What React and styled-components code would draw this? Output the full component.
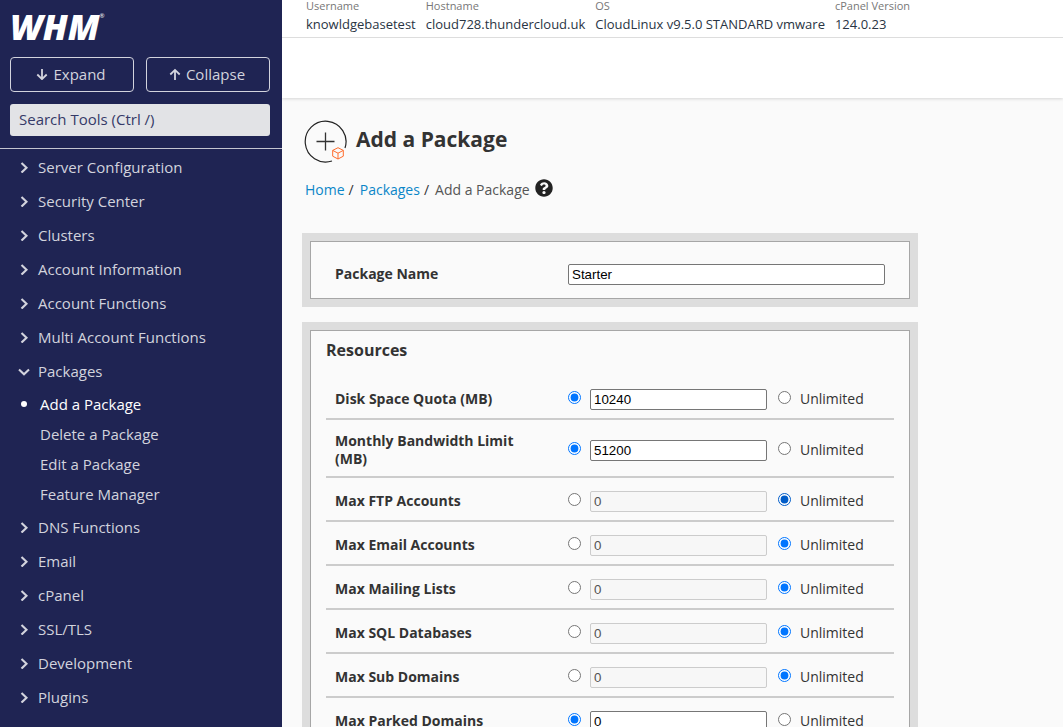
import React, { useState } from 'react';
import styled, { createGlobalStyle } from 'styled-components';
import { FaQuestionCircle } from 'react-icons/fa';

const GlobalStyle = createGlobalStyle`
    * {
        box-sizing: border-box;
    }

    body {
        margin: 0;
        background: #fafafa;
        color: #333;
        font-family: "Open Sans", "Noto Sans", sans-serif;
        font-size: 14px;
    }
`;

const Layout = styled.div`
    display: flex;
    height: 100vh;
    overflow: hidden;
`;

const Sidebar = styled.aside`
    flex: 0 0 282px;
    background: #1f2453;
    color: #d2d3dd;
    overflow-y: auto;
    scrollbar-width: none;
`;

const SidebarTop = styled.div`
    display: flex;
    flex-direction: column;
    padding: 8px 12px 12px 10px;
    border-bottom: 1px solid #c4c5d0;
`;

const Logo = styled.a`
    display: flex;
    align-items: flex-start;
    height: 37px;
    margin-bottom: 12px;
    color: #fff;
    font-size: 35px;
    font-style: italic;
    font-weight: 800;
    line-height: 37px;
    text-decoration: none;

    sup {
        font-size: 6px;
        font-style: normal;
        font-weight: 400;
        line-height: 16px;
    }
`;

const ButtonRow = styled.div`
    display: flex;
    gap: 12px;
    margin-bottom: 12px;
`;

const TreeButton = styled.button`
    display: flex;
    flex: 1;
    align-items: center;
    justify-content: center;
    gap: 5px;
    height: 35px;
    padding: 0 2px 2px 0;
    background: transparent;
    border: 1px solid #d2d3dd;
    border-radius: 4px;
    color: #d2d3dd;
    font-family: inherit;
    font-size: 15px;
    cursor: pointer;
`;

const SearchInput = styled.input`
    height: 32px;
    padding: 0 9px 2px;
    background: #e2e3e6;
    border: 0;
    border-radius: 3px;
    font-family: inherit;
    font-size: 15px;

    &::placeholder {
        color: #353a68;
        opacity: 1;
    }
`;

const Menu = styled.ul`
    margin: 0;
    padding: 1px 0 0;
    list-style: none;
`;

const MenuButton = styled.button`
    display: flex;
    align-items: center;
    gap: 8px;
    width: 100%;
    height: 34px;
    padding: 0 0 0 18px;
    background: transparent;
    border: 0;
    color: inherit;
    font-family: inherit;
    font-size: 15px;
    text-align: left;
    cursor: pointer;
`;

const SubMenu = styled.ul`
    margin: 0;
    padding: 1px 0;
    list-style: none;
`;

const SubLink = styled.a`
    display: flex;
    align-items: center;
    gap: 13px;
    height: 30px;
    padding-left: 21px;
    color: ${({ $active }) => ($active ? '#fff' : 'inherit')};
    font-size: 15px;
    text-decoration: none;

    &:before {
        content: "";
        width: 6px;
        height: 6px;
        border-radius: 50%;
        background: ${({ $active }) => ($active ? '#fff' : 'transparent')};
    }
`;

const Main = styled.main`
    flex: 1;
    min-width: 0;
    overflow-y: auto;
    scrollbar-width: none;
`;

const Header = styled.header`
    height: 98px;
    background: #fff;
    box-shadow: 0 1px 3px rgba(0, 0, 0, 0.15);
`;

const InfoBar = styled.dl`
    display: flex;
    gap: 10px;
    height: 38px;
    margin: 0;
    padding: 0 24px;
    border-bottom: 1px solid #ddd;
    white-space: nowrap;

    dt {
        height: 14px;
        color: #777;
        font-size: 11px;
        line-height: 12px;
    }

    dd {
        margin: 0;
        color: #293443;
        font-size: 13px;
        line-height: 20px;
    }
`;

const Content = styled.div`
    padding: 22px 20px;
`;

const TitleRow = styled.div`
    display: flex;
    gap: 9px;
    margin-left: 2px;

    h1 {
        margin: 4px 0 0;
        font-size: 21px;
        line-height: 30px;
    }
`;

const Breadcrumb = styled.nav`
    display: flex;
    align-items: center;
    height: 24px;
    margin: 14px 0 32px 3px;

    a {
        color: #0b86c8;
        text-decoration: none;
    }
`;

const Separator = styled.span`
    margin: 0 6px 0 4px;
`;

const CurrentPage = styled.span`
    color: #555;
`;

const HelpButton = styled.button`
    display: flex;
    margin-left: 5px;
    padding: 0 0 2px;
    background: transparent;
    border: 0;
    color: #222;
    cursor: pointer;
`;

const Panel = styled.section`
    max-width: 616px;
    margin-bottom: 15px;
    border: 8px solid #ddd;
`;

const PanelBody = styled.div`
    padding: ${({ $padding }) => $padding};
    border: 1px solid #a6a6a6;
`;

const SectionTitle = styled.h2`
    margin: 0 0 15px;
    font-size: 16px;
    line-height: 22px;
`;

const Row = styled.div`
    display: grid;
    grid-template-columns: 226px 1fr;
    align-items: center;
    column-gap: 7px;
    min-height: 44px;
    padding: ${({ $plain }) => ($plain ? '0 8px 0 9px' : '12px 8px 8px 9px')};
    border-bottom: ${({ $plain }) => ($plain ? '0' : '2px solid #ccc')};
`;

const RowLabel = styled.label`
    max-width: 200px;
    font-weight: 700;
    line-height: 18px;
`;

const TextInput = styled.input`
    width: ${({ $width }) => $width};
    height: 21px;
    padding: 1px 3px;
    border: 1px solid #767676;
    border-radius: 2px;
    background: #fff;
    color: #000;
    font-family: "Liberation Sans", Arial, sans-serif;

    &:disabled {
        border-color: #ccc;
        background: #f7f7f7;
        color: #545454;
    }
`;

const Limit = styled.div`
    display: flex;
    align-items: center;
`;

const Radio = styled.input`
    width: 13px;
    height: 13px;
    margin: 0 9px 4px 0;
    accent-color: ${({ $dark }) => ($dark ? '#005cc8' : '#0075ff')};
`;

const UnlimitedLabel = styled.label`
    display: flex;
    align-items: center;
    margin-left: 11px;
    line-height: 20px;
`;

const serverInfo = [
    ['Username', 'knowldgebasetest'],
    ['Hostname', 'cloud728.thundercloud.uk'],
    ['OS', 'CloudLinux v9.5.0 STANDARD vmware'],
    ['cPanel Version', '124.0.23'],
];

const menu = [
    { name: 'Server Configuration' },
    { name: 'Security Center' },
    { name: 'Clusters' },
    { name: 'Account Information' },
    { name: 'Account Functions' },
    { name: 'Multi Account Functions' },
    { name: 'Packages', items: ['Add a Package', 'Delete a Package', 'Edit a Package', 'Feature Manager'] },
    { name: 'DNS Functions' },
    { name: 'Email' },
    { name: 'cPanel' },
    { name: 'SSL/TLS' },
    { name: 'Development' },
    { name: 'Plugins' },
];

const resources = [
    { id: 'quota', label: 'Disk Space Quota (MB)', value: '10240' },
    { id: 'bwlimit', label: 'Monthly Bandwidth Limit (MB)', value: '51200' },
    { id: 'maxftp', label: 'Max FTP Accounts', value: '0', unlimited: true, dark: true },
    { id: 'maxpop', label: 'Max Email Accounts', value: '0', unlimited: true },
    { id: 'maxlst', label: 'Max Mailing Lists', value: '0', unlimited: true },
    { id: 'maxsql', label: 'Max SQL Databases', value: '0', unlimited: true },
    { id: 'maxsub', label: 'Max Sub Domains', value: '0', unlimited: true },
    { id: 'maxpark', label: 'Max Parked Domains', value: '0' },
];

function Chevron({ open }) {
    return (
        <svg width='12' height='12' viewBox='0 0 12 12' fill='none' stroke='currentColor' strokeWidth='2.1' aria-hidden='true'>
            <path d={open ? 'M1 4.5 6 9.2 11 4.5' : 'M3.5 2 8.5 6.8 3.5 11.6'} />
        </svg>
    );
}

function Arrow({ up }) {
    return (
        <svg width='12' height='12' viewBox='0 0 12 12' fill='none' stroke='currentColor' strokeWidth='1.8' aria-hidden='true'>
            <path d={up ? 'M6 12V2M1.3 6.5 6 1.9 10.7 6.5' : 'M6 1V11M1.3 6.5 6 11.1 10.7 6.5'} />
        </svg>
    );
}

function PackageIcon() {
    return (
        <svg width='43' height='43' viewBox='0 0 43 43' fill='none' aria-hidden='true'>
            <path d='M41 28A20.4 20.4 0 1 0 28 41' stroke='#222' strokeWidth='1.2' />
            <path d='M21.5 12.5V30.5M12.5 21.5H30.5' stroke='#333' strokeWidth='1.3' />
            <path d='M34 27.7 39.3 30.4V36.2L34 39 28.7 36.2V30.4ZM28.7 30.4 34 33.2 39.3 30.4M34 33.2V39' stroke='#ff6c2c' />
        </svg>
    );
}

function ResourceRow({ id, label, value, unlimited, dark }) {
    const [isUnlimited, setIsUnlimited] = useState(Boolean(unlimited));

    return (
        <Row>
            <RowLabel htmlFor={id}>{label}</RowLabel>
            <Limit>
                <Radio
                    type='radio'
                    name={`${id}_mode`}
                    aria-label={`${label} limit`}
                    checked={!isUnlimited}
                    onChange={() => setIsUnlimited(false)}
                />
                <TextInput id={id} type='text' $width='177px' defaultValue={value} disabled={isUnlimited} />
                <UnlimitedLabel>
                    <Radio
                        type='radio'
                        name={`${id}_mode`}
                        $dark={dark}
                        checked={isUnlimited}
                        onChange={() => setIsUnlimited(true)}
                    />
                    Unlimited
                </UnlimitedLabel>
            </Limit>
        </Row>
    );
}

export default function App() {
    const [opened, setOpened] = useState('Packages');

    return (
        <Layout>
            <GlobalStyle />
            <Sidebar>
                <SidebarTop>
                    <Logo href='#home'>WHM<sup>®</sup></Logo>
                    <ButtonRow>
                        <TreeButton type='button'><Arrow />Expand</TreeButton>
                        <TreeButton type='button' onClick={() => setOpened('')}><Arrow up />Collapse</TreeButton>
                    </ButtonRow>
                    <SearchInput type='text' aria-label='Search Tools' placeholder='Search Tools (Ctrl /)' />
                </SidebarTop>
                <Menu>
                    {menu.map(({ name, items }) => (
                        <li key={name}>
                            <MenuButton type='button' onClick={() => setOpened(opened === name ? '' : name)}>
                                <Chevron open={opened === name} />
                                {name}
                            </MenuButton>
                            {items && opened === name && (
                                <SubMenu>
                                    {items.map((item, i) => (
                                        <li key={item}><SubLink href='#packages' $active={i === 0}>{item}</SubLink></li>
                                    ))}
                                </SubMenu>
                            )}
                        </li>
                    ))}
                </Menu>
            </Sidebar>

            <Main>
                <Header>
                    <InfoBar>
                        {serverInfo.map(([name, value]) => (
                            <div key={name}>
                                <dt>{name}</dt>
                                <dd>{value}</dd>
                            </div>
                        ))}
                    </InfoBar>
                </Header>
                <Content>
                    <TitleRow>
                        <PackageIcon />
                        <h1>Add a Package</h1>
                    </TitleRow>
                    <Breadcrumb>
                        <a href='#home'>Home</a>
                        <Separator>/</Separator>
                        <a href='#packages'>Packages</a>
                        <Separator>/</Separator>
                        <CurrentPage>Add a Package</CurrentPage>
                        <HelpButton type='button' aria-label='Help'><FaQuestionCircle size='18' /></HelpButton>
                    </Breadcrumb>

                    <Panel>
                        <PanelBody $padding='10px 15px 2px'>
                            <Row $plain>
                                <RowLabel htmlFor='name'>Package Name</RowLabel>
                                <TextInput id='name' type='text' $width='317px' defaultValue='Starter' />
                            </Row>
                        </PanelBody>
                    </Panel>

                    <Panel>
                        <PanelBody $padding='8px 15px 15px'>
                            <SectionTitle>Resources</SectionTitle>
                            {resources.map((item) => <ResourceRow key={item.id} {...item} />)}
                        </PanelBody>
                    </Panel>
                </Content>
            </Main>
        </Layout>
    );
}
